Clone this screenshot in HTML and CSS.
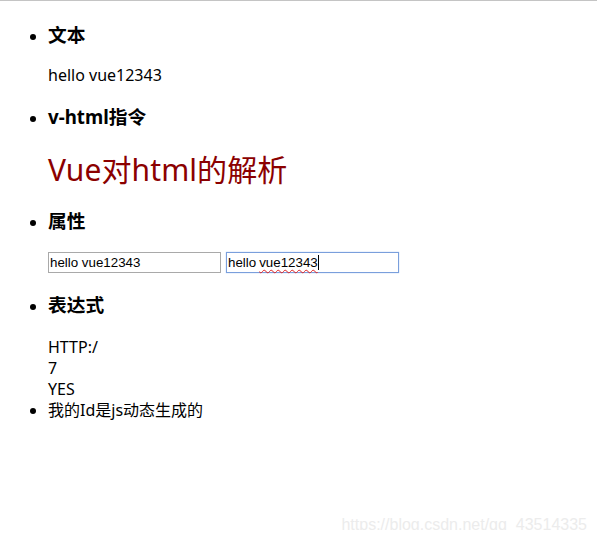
FILE: index.html
```html
<!DOCTYPE html>
<html lang="zh">
<head>
<meta charset="utf-8">
<title>Vue demo</title>
<link rel="stylesheet" href="styles.css">
</head>
<body>
<ul class="list">
  <li>
    <h3 class="sec-title first">文本</h3>
    <p class="text">hello vue12343</p>
  </li>
  <li>
    <h3 class="sec-title">v-html指令</h3>
    <div class="big">Vue对html的解析</div>
  </li>
  <li>
    <h3 class="sec-title after-big">属性</h3>
    <div class="fields">
      <div class="field">hello vue12343</div>
      <div class="field focused">hello <span class="misspelled">vue12343</span><span class="caret"></span></div>
    </div>
  </li>
  <li>
    <h3 class="sec-title after-fields">表达式</h3>
    <div class="expr">
      <div>HTTP:/</div>
      <div>7</div>
      <div>YES</div>
    </div>
  </li>
  <li class="plain">我的Id是js动态生成的</li>
</ul>
<div class="watermark">https://blog.csdn.net/qq_43514335</div>
</body>
</html>
```
FILE: styles.css
```css
html {
  background: #fff;
}
body {
  margin: 0;
  padding: 3px 8px 8px;
  border-top: 1px solid #c4c4c4;
  font-family: "Noto Sans", "Noto Sans CJK SC", sans-serif;
  font-size: 16px;
  line-height: 21px;
  color: #000;
  position: relative;
  min-height: 530px;
  box-sizing: border-box;
}
.list {
  margin: 0;
  padding-left: 40px;
  list-style: disc;
}
.sec-title {
  font-size: 18.72px;
  font-weight: bold;
  line-height: 25px;
  margin: 18px 0 0;
}
.sec-title.first {
  margin-top: 18px;
}
.text {
  margin: 18px 0 0;
}
.big {
  margin-top: 21.5px;
  font-size: 30px;
  line-height: 37px;
  color: #8b0000;
  letter-spacing: 0.1px;
}
.sec-title.after-big {
  margin-top: 20px;
}
.fields {
  margin-top: 19.5px;
  display: flex;
  gap: 5px;
}
.field {
  box-sizing: border-box;
  width: 173px;
  height: 21px;
  border: 1px solid #a9a9a9;
  padding: 0 1px;
  font-family: "Liberation Sans", Arial, sans-serif;
  font-size: 13.33px;
  line-height: 19px;
  white-space: nowrap;
  display: flex;
  align-items: center;
}
.field.focused {
  border-color: #7a9fdc;
  box-shadow: 0 0 1px #9dbdf0;
}
.misspelled {
  text-decoration: underline wavy #e02020;
  text-decoration-thickness: 1px;
  text-underline-offset: 2px;
  margin-left: 3px;
}
.caret {
  display: inline-block;
  width: 1px;
  height: 15px;
  background: #000;
}
.sec-title.after-fields {
  margin-top: 18.5px;
}
.expr {
  margin-top: 20px;
}
.watermark {
  position: absolute;
  right: 10px;
  top: 514px;
  font-family: "Liberation Sans", Arial, sans-serif;
  font-size: 16px;
  line-height: 20px;
  color: #ececec;
}
```
